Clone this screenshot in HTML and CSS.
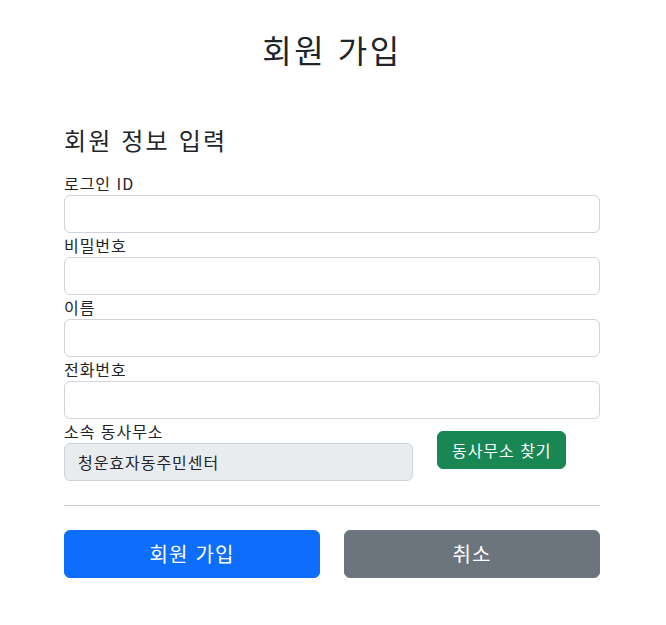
FILE: index.html
```html
<!DOCTYPE html>
<html lang="ko">
<head>
<meta charset="utf-8">
<title>회원 가입</title>
<link rel="stylesheet" href="styles.css">
</head>
<body>
<div class="container">
  <div class="page-header">
    <h2 class="title">회원 가입</h2>
  </div>
  <form class="form">
    <h4 class="section-title">회원 정보 입력</h4>
    <div class="field">
      <label class="label" for="loginId">로그인 ID</label>
      <input class="input" id="loginId" type="text">
    </div>
    <div class="field">
      <label class="label" for="password">비밀번호</label>
      <input class="input" id="password" type="password">
    </div>
    <div class="field">
      <label class="label" for="name">이름</label>
      <input class="input" id="name" type="text">
    </div>
    <div class="field">
      <label class="label" for="phone">전화번호</label>
      <input class="input" id="phone" type="text">
    </div>
    <div class="office-row">
      <div class="field office-field">
        <label class="label" for="office">소속 동사무소</label>
        <input class="input input-readonly" id="office" type="text" value="청운효자동주민센터" readonly>
      </div>
      <div class="office-action">
        <button type="button" class="btn btn-success">동사무소 찾기</button>
      </div>
    </div>
    <hr class="divider">
    <div class="actions">
      <button type="submit" class="btn btn-lg btn-primary">회원 가입</button>
      <button type="button" class="btn btn-lg btn-secondary">취소</button>
    </div>
  </form>
</div>
</body>
</html>
```
FILE: styles.css
```css
* {
  box-sizing: border-box;
}

body {
  margin: 0;
  background: #fff;
  color: #212529;
  font-family: "Noto Sans CJK KR", "Noto Sans", sans-serif;
  font-size: 16px;
  line-height: 1.5;
  letter-spacing: 0.06em;
}

.container {
  width: 536px;
  margin: 0 0 0 64px;
}

.page-header {
  padding-top: 30px;
  text-align: center;
}

.title {
  margin: 0;
  font-size: 32px;
  font-weight: 400;
  line-height: 38px;
  letter-spacing: 0.08em;
}

.form {
  margin-top: 57px;
}

.section-title {
  margin: 0 0 17px;
  font-size: 24px;
  font-weight: 400;
  line-height: 29px;
  letter-spacing: 0.09em;
}

.field {
  display: flex;
  flex-direction: column;
}

.label {
  display: block;
  height: 24px;
  line-height: 24px;
  font-size: 16px;
}

.input {
  display: block;
  width: 100%;
  height: 38px;
  padding: 6px 12px 6px 13px;
  border: 1px solid #ced4da;
  border-radius: 6px;
  background: #fff;
  color: #212529;
  font-family: inherit;
  font-size: 16px;
  line-height: 24px;
  letter-spacing: 0.06em;
}

.input-readonly {
  background: #e9ecef;
}

.office-row {
  display: flex;
  align-items: center;
  gap: 24px;
}

.office-field {
  width: 349px;
  flex: none;
}

.office-action {
  flex: 1;
}

.btn {
  display: inline-block;
  border: 1px solid transparent;
  border-radius: 6px;
  padding: 6px 12px;
  font-family: inherit;
  font-size: 16px;
  line-height: 24px;
  letter-spacing: 0.06em;
  color: #fff;
  cursor: pointer;
}

.btn-success {
  padding: 6px 13px 6px 14px;
  background: #198754;
  border-color: #198754;
}

.divider {
  margin: 24px 0;
  border: 0;
  border-top: 1px solid #cfcfcf;
}

.actions {
  display: grid;
  grid-template-columns: 1fr 1fr;
  gap: 24px;
}

.btn-lg {
  width: 100%;
  padding: 8px 16px;
  font-size: 20px;
  line-height: 30px;
  border-radius: 6px;
  letter-spacing: 0.06em;
}

.btn-primary {
  background: #0d6efd;
  border-color: #0d6efd;
}

.btn-secondary {
  background: #6c757d;
  border-color: #6c757d;
}
```
